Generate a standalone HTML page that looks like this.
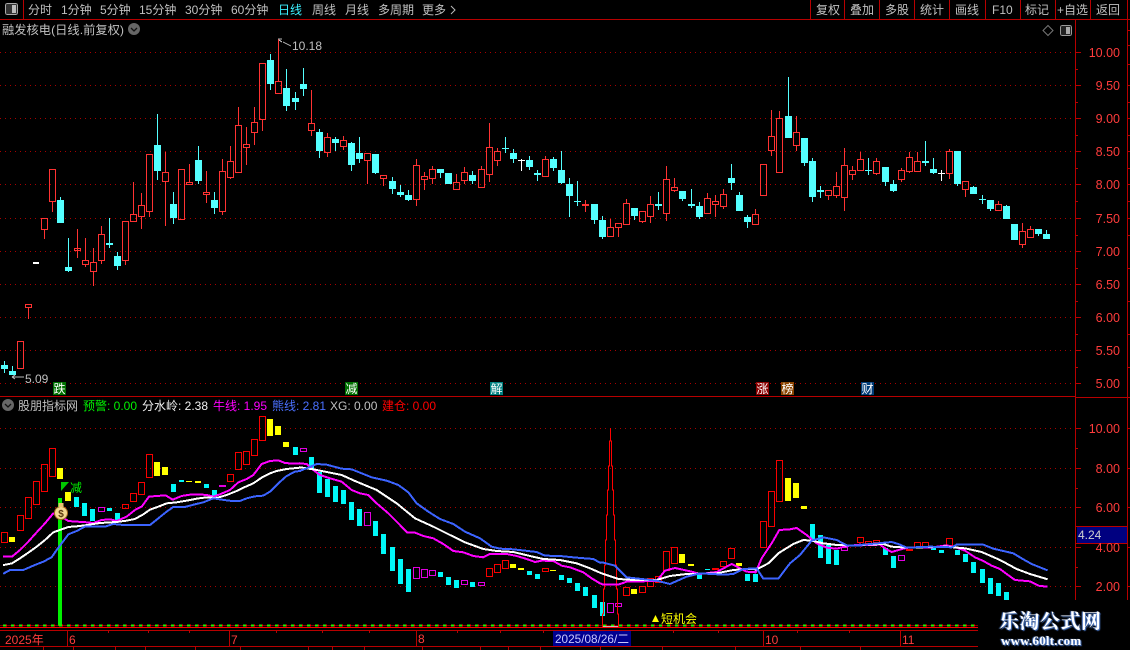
<!DOCTYPE html>
<html><head><meta charset="utf-8"><style>
html,body{margin:0;padding:0;background:#000;width:1130px;height:650px;overflow:hidden}
svg{position:absolute;left:0;top:0}
text{font-family:"Liberation Sans","WenQuanYi Zen Hei","Noto Sans CJK SC",sans-serif;font-size:12px}
.g{fill:#c0c0c0}.a{fill:#ff3c3c;text-anchor:end;font-size:12.5px}
#wm{position:absolute;left:978px;top:600px;width:152px;height:50px;background:#000}
#wm div{position:absolute;white-space:nowrap;color:#fff;text-shadow:1px 1px 1px #4a78c8,-1px 0 1px #4a78c8}
</style></head><body>
<svg width="1130" height="650" viewBox="0 0 1130 650" shape-rendering="crispEdges">
<!-- grid -->
<path d="M0 52.5H1075M0 85.5H1075M0 118.5H1075M0 151.5H1075M0 184.5H1075M0 218.5H1075M0 251.5H1075M0 284.5H1075M0 317.5H1075M0 350.5H1075M0 383.5H1075M0 428.5H1075M0 468.5H1075M0 507.5H1075M0 547.5H1075M0 586.5H1075" stroke="#a80000" stroke-width="1" stroke-dasharray="1 4" fill="none"/>
<!-- frame -->
<path d="M0 19.5H1130M23.5 0V19M810.5 0V19M844.5 0V19M879.5 0V19M914.5 0V19M949.5 0V19M985.5 0V19M1020.5 0V19M1055.5 0V19M1090.5 0V19M1127.5 0V600M0 396.5H1076M1075.5 19V600M1076 397.5H1130M1076 526.5H1127M1076 543.5H1127M0 630.5H978M0 646.5H978M67.5 630V646M229.5 630V646M416.5 630V646M763.5 630V646M900.5 630V646M1075 52.5h6M1075 85.5h6M1075 118.5h6M1075 151.5h6M1075 184.5h6M1075 218.5h6M1075 251.5h6M1075 284.5h6M1075 317.5h6M1075 350.5h6M1075 383.5h6M1075 69.5h3M1075 102.5h3M1075 135.5h3M1075 168.5h3M1075 201.5h3M1075 235.5h3M1075 268.5h3M1075 301.5h3M1075 334.5h3M1075 367.5h3M1075 428.5h6M1075 468.5h6M1075 507.5h6M1075 547.5h6M1075 586.5h6M1075 448.5h3M1075 488.5h3M1075 567.5h3M1127 30.5h3M1127 45.5h3M1127 64.5h3M1127 85.5h3M1127 102.5h3M1127 118.5h3M1127 135.5h3M1127 151.5h3M1127 168.5h3M1127 184.5h3M1127 201.5h3M1127 218.5h3M1127 235.5h3M1127 268.5h3M1127 301.5h3M1127 334.5h3M1127 367.5h3M1127 428.5h3M1127 468.5h3M1127 507.5h3M1127 547.5h3M1127 586.5h3M108.5 630v3M148.5 630v3M189.5 630v3M276.5 630v3M322.5 630v3M369.5 630v3M457.5 630v3M500.5 630v3M543.5 630v3M673.5 630v3M718.5 630v3M797.5 630v3M849.5 630v3M43.5 646v4M73.5 646v4M115.5 646v4M145.5 646v4M195.5 646v4M240.5 646v4M308.5 646v4M332.5 646v4M364.5 646v4M422.5 646v4M480.5 646v4M508.5 646v4M540.5 646v4M600.5 646v4M662.5 646v4M735.5 646v4M800.5 646v4M860.5 646v4" stroke="#b80000" stroke-width="1" fill="none"/>
<!-- top bar icons -->
<rect x="5.5" y="3.5" width="12" height="11" rx="2" fill="#333" stroke="#aaa"/><rect x="12" y="5" width="4" height="8" fill="#bbb"/>
<rect x="1060.5" y="25.5" width="11" height="10" rx="2" fill="#222" stroke="#999"/><rect x="1066" y="27" width="4" height="7" fill="#aaa"/>
<g shape-rendering="auto"><path d="M1048 25.5l5 5-5 5-5-5z" fill="none" stroke="#777"/>
<circle cx="134" cy="29" r="6" fill="#666"/><path d="M131 28l3 3 3-3" fill="none" stroke="#111" stroke-width="1.3"/>
<circle cx="8" cy="405" r="6" fill="#666"/><path d="M5 404l3 3 3-3" fill="none" stroke="#111" stroke-width="1.3"/>
<path d="M451 6l4 4-4 4" fill="none" stroke="#bbb"/></g>
<!-- top candles red -->
<path fill="none" stroke="#ff3232" stroke-width="1" d="M17.5 341.5h6V368.5h-6zM28.5 307V319M25.5 304.5h6V307.5h-6zM44.5 229V239M41.5 218.5h6V229.5h-6zM52.5 201V212M49.5 169.5h6V201.5h-6zM77.5 229V258M74.5 248.5h6V250.5h-6zM85.5 238V260M85.5 264V267M82.5 260.5h6V264.5h-6zM93.5 248V262M93.5 271V286M90.5 262.5h6V271.5h-6zM101.5 226V234M101.5 260V264M98.5 234.5h6V260.5h-6zM125.5 260V265M122.5 221.5h6V260.5h-6zM133.5 182V214M130.5 214.5h6V221.5h-6zM141.5 193V205M141.5 216V229M138.5 205.5h6V216.5h-6zM149.5 211V217M146.5 154.5h6V211.5h-6zM165.5 152V172M165.5 181V226M162.5 172.5h6V181.5h-6zM178.5 169.5h6V219.5h-6zM189.5 164V182M186.5 182.5h6V184.5h-6zM206.5 171V192M206.5 194V203M203.5 192.5h6V194.5h-6zM222.5 159V171M222.5 211V215M219.5 171.5h6V211.5h-6zM230.5 146V161M230.5 177V179M227.5 161.5h6V177.5h-6zM238.5 107V125M238.5 172V173M235.5 125.5h6V172.5h-6zM246.5 127V144M246.5 147V165M243.5 144.5h6V147.5h-6zM254.5 107V122M254.5 132V145M251.5 122.5h6V132.5h-6zM262.5 119V131M259.5 63.5h6V119.5h-6zM278.5 39V81M275.5 81.5h6V93.5h-6zM311.5 90V123M311.5 130V136M308.5 123.5h6V130.5h-6zM327.5 133V137M327.5 152V157M324.5 137.5h6V152.5h-6zM343.5 136V140M343.5 146V150M340.5 140.5h6V146.5h-6zM367.5 160V184M364.5 153.5h6V160.5h-6zM383.5 178V186M380.5 175.5h6V178.5h-6zM416.5 159V165M416.5 199V206M413.5 165.5h6V199.5h-6zM424.5 172V176M424.5 179V190M421.5 176.5h6V179.5h-6zM432.5 166V169M432.5 178V184M429.5 169.5h6V178.5h-6zM456.5 174V182M456.5 189V190M453.5 182.5h6V189.5h-6zM464.5 167V172M464.5 180V184M461.5 172.5h6V180.5h-6zM481.5 166V169M478.5 169.5h6V187.5h-6zM489.5 123V147M489.5 174V182M486.5 147.5h6V174.5h-6zM497.5 148V151M497.5 160V166M494.5 151.5h6V160.5h-6zM545.5 156V159M542.5 159.5h6V176.5h-6zM585.5 200V204M585.5 205V212M582.5 204.5h6V205.5h-6zM610.5 219V227M607.5 227.5h6V236.5h-6zM618.5 227V237M615.5 223.5h6V227.5h-6zM626.5 199V203M623.5 203.5h6V224.5h-6zM642.5 221V223M639.5 211.5h6V221.5h-6zM650.5 196V204M650.5 216V223M647.5 204.5h6V216.5h-6zM666.5 166V179M666.5 213V221M663.5 179.5h6V213.5h-6zM674.5 178V187M674.5 190V192M671.5 187.5h6V190.5h-6zM707.5 193V198M707.5 213V214M704.5 198.5h6V213.5h-6zM715.5 195V201M715.5 204V217M712.5 201.5h6V204.5h-6zM723.5 189V194M723.5 206V209M720.5 194.5h6V206.5h-6zM755.5 209V214M752.5 214.5h6V224.5h-6zM760.5 164.5h6V195.5h-6zM771.5 110V136M771.5 150V156M768.5 136.5h6V150.5h-6zM779.5 111V118M776.5 118.5h6V172.5h-6zM796.5 116V132M796.5 145V151M793.5 132.5h6V145.5h-6zM828.5 195V200M825.5 190.5h6V195.5h-6zM836.5 172V186M836.5 195V198M833.5 186.5h6V195.5h-6zM844.5 148V165M844.5 197V211M841.5 165.5h6V197.5h-6zM852.5 166V170M852.5 174V180M849.5 170.5h6V174.5h-6zM860.5 152V159M857.5 159.5h6V170.5h-6zM876.5 158V161M876.5 173V175M873.5 161.5h6V173.5h-6zM901.5 168V170M901.5 179V182M898.5 170.5h6V179.5h-6zM909.5 152V157M909.5 171V173M906.5 157.5h6V171.5h-6zM917.5 152V161M914.5 161.5h6V171.5h-6zM949.5 149V151M949.5 173V179M946.5 151.5h6V173.5h-6zM965.5 189V197M962.5 181.5h6V189.5h-6zM998.5 201V204M998.5 210V211M995.5 204.5h6V210.5h-6zM1022.5 223V231M1022.5 244V248M1019.5 231.5h6V244.5h-6zM1030.5 226V229M1027.5 229.5h6V237.5h-6z"/>
<!-- top candles cyan -->
<path fill="#54ffff" d="M1 365h7v4h-7zM4 361h1v12h-1zM9 371h7v4h-7zM12 366h1v9h-1zM57 200h7v23h-7zM60 197h1v4h-1zM65 267h7v4h-7zM68 238h1v34h-1zM106 243h7v2h-7zM109 218h1v30h-1zM114 256h7v10h-7zM117 252h1v18h-1zM154 145h7v26h-7zM157 114h1v66h-1zM170 204h7v14h-7zM173 192h1v32h-1zM195 160h7v21h-7zM198 146h1v38h-1zM211 200h7v8h-7zM214 192h1v22h-1zM267 60h7v24h-7zM270 54h1v36h-1zM283 88h7v18h-7zM286 69h1v42h-1zM292 98h7v4h-7zM295 92h1v18h-1zM300 84h7v5h-7zM303 68h1v28h-1zM316 132h7v19h-7zM319 129h1v29h-1zM332 139h7v4h-7zM335 137h1v14h-1zM348 143h7v22h-7zM351 142h1v29h-1zM356 153h7v6h-7zM359 137h1v26h-1zM372 154h7v19h-7zM375 154h1v20h-1zM389 181h7v8h-7zM392 177h1v17h-1zM397 192h7v3h-7zM400 185h1v12h-1zM405 195h7v5h-7zM408 190h1v11h-1zM437 169h7v4h-7zM440 169h1v9h-1zM445 173h7v11h-7zM469 175h7v6h-7zM472 171h1v13h-1zM502 148h7v1h-7zM505 137h1v16h-1zM510 153h7v6h-7zM513 149h1v14h-1zM526 160h7v7h-7zM529 156h1v14h-1zM534 173h7v2h-7zM537 170h1v11h-1zM550 159h7v9h-7zM553 157h1v14h-1zM558 170h7v13h-7zM561 151h1v33h-1zM566 184h7v12h-7zM569 178h1v39h-1zM574 201h7v1h-7zM577 181h1v25h-1zM591 204h7v16h-7zM594 204h1v20h-1zM599 220h7v17h-7zM602 216h1v23h-1zM631 208h7v8h-7zM634 208h1v12h-1zM655 204h7v2h-7zM658 192h1v18h-1zM679 191h7v8h-7zM682 191h1v10h-1zM688 204h7v2h-7zM691 189h1v19h-1zM696 206h7v11h-7zM699 202h1v17h-1zM728 178h7v5h-7zM731 164h1v26h-1zM736 195h7v16h-7zM739 192h1v19h-1zM744 217h7v5h-7zM747 215h1v13h-1zM785 116h7v22h-7zM788 77h1v61h-1zM801 138h7v25h-7zM804 138h1v28h-1zM809 161h7v36h-7zM812 158h1v44h-1zM817 190h7v2h-7zM820 186h1v12h-1zM865 170h7v1h-7zM868 158h1v17h-1zM882 167h7v15h-7zM885 167h1v19h-1zM890 184h7v7h-7zM893 180h1v12h-1zM922 161h7v2h-7zM925 141h1v25h-1zM930 169h7v4h-7zM933 158h1v16h-1zM954 151h7v33h-7zM957 151h1v35h-1zM970 187h7v7h-7zM973 186h1v8h-1zM979 199h7v1h-7zM982 195h1v9h-1zM987 200h7v9h-7zM990 200h1v11h-1zM1003 206h7v13h-7zM1006 205h1v2h-1zM1011 224h7v16h-7zM1035 229h7v5h-7zM1038 229h1v7h-1zM1043 234h7v5h-7zM1046 230h1v5h-1z"/>
<!-- top white -->
<path fill="#fff" d="M33 262h6v2h-6zM518 160h7v1h-7zM521 159h1v12h-1zM938 173h7v1h-7zM941 170h1v11h-1z"/>
<!-- annotations -->
<path d="M278 39h4M283 42l8 4M279 40l3 2M12 377h12" stroke="#bdbdbd" fill="none"/>
<path d="M12 377l3-2M12 377l3 2" stroke="#bdbdbd" fill="none" shape-rendering="auto"/>
<text x="292" y="50" class="g">10.18</text><text x="25" y="383" class="g">5.09</text>
<!-- tags -->
<rect x="53" y="382" width="13" height="13" fill="#007000"/><rect x="345" y="382" width="13" height="13" fill="#007000"/><rect x="490" y="382" width="13" height="13" fill="#008080"/><rect x="756" y="382" width="13" height="13" fill="#8b0000"/><rect x="781" y="382" width="13" height="13" fill="#8b4500"/><rect x="861" y="382" width="13" height="13" fill="#003c78"/>
<g fill="#fff"><text x="53.5" y="393">跌</text><text x="345.5" y="393">减</text><text x="490.5" y="393">解</text><text x="756.5" y="393">涨</text><text x="781.5" y="393">榜</text><text x="861.5" y="393">财</text></g>
<!-- lower candles -->
<path fill="#00f8f8" d="M74 497h5v10h-5zM82 503h5v13h-5zM90 509h5v12h-5zM107 508h5v3h-5zM115 513h5v8h-5zM171 484h5v8h-5zM179 480h5v2h-5zM204 484h5v4h-5zM212 490h5v7h-5zM293 447h5v8h-5zM309 457h5v13h-5zM317 472h5v21h-5zM325 479h5v18h-5zM333 486h5v16h-5zM341 490h5v14h-5zM349 502h5v18h-5zM357 509h5v17h-5zM373 521h5v15h-5zM381 534h5v20h-5zM390 547h5v24h-5zM398 559h5v25h-5zM406 569h5v23h-5zM438 572h5v5h-5zM446 577h5v8h-5zM454 580h5v8h-5zM470 582h5v5h-5zM527 571h5v4h-5zM535 574h5v5h-5zM559 575h5v5h-5zM567 578h5v5h-5zM575 583h5v8h-5zM583 587h5v9h-5zM592 595h5v13h-5zM600 602h5v14h-5zM697 574h5v5h-5zM705 569h5v1h-5zM745 574h5v7h-5zM753 574h5v8h-5zM810 524h5v15h-5zM818 535h5v23h-5zM826 545h5v19h-5zM834 550h5v15h-5zM883 548h5v7h-5zM891 556h5v12h-5zM931 547h5v3h-5zM939 550h5v3h-5zM955 550h5v5h-5zM963 554h5v8h-5zM971 562h5v11h-5zM980 569h5v14h-5zM988 578h5v16h-5zM996 583h5v13h-5zM1004 592h5v8h-5z"/>
<path fill="#ffff00" d="M9 537h6v5h-6zM57 468h6v11h-6zM65 492h6v9h-6zM154 462h6v14h-6zM162 467h6v8h-6zM186 481h6v1h-6zM195 481h6v2h-6zM267 419h6v17h-6zM275 426h6v9h-6zM283 442h6v5h-6zM510 564h6v4h-6zM518 568h6v2h-6zM550 570h6v1h-6zM631 589h6v5h-6zM679 554h6v9h-6zM688 564h6v2h-6zM736 563h6v3h-6zM785 478h6v23h-6zM793 483h6v15h-6zM801 506h6v3h-6z"/>
<path fill="none" stroke="#f80000" stroke-width="1" d="M1.5 532.5h6V542.5h-6zM17.5 515.5h6V530.5h-6zM25.5 497.5h6V518.5h-6zM33.5 481.5h6V504.5h-6zM41.5 464.5h6V491.5h-6zM49.5 448.5h6V476.5h-6zM122.5 504.5h6V508.5h-6zM130.5 493.5h6V501.5h-6zM138.5 482.5h6V494.5h-6zM146.5 454.5h6V477.5h-6zM227.5 474.5h6V481.5h-6zM235.5 452.5h6V469.5h-6zM243.5 451.5h6V464.5h-6zM251.5 439.5h6V455.5h-6zM259.5 416.5h6V440.5h-6zM486.5 568.5h6V576.5h-6zM494.5 564.5h6V572.5h-6zM502.5 560.5h6V568.5h-6zM542.5 568.5h6V571.5h-6zM623.5 587.5h6V595.5h-6zM639.5 586.5h6V592.5h-6zM647.5 578.5h6V586.5h-6zM655.5 576.5h6V582.5h-6zM663.5 551.5h6V570.5h-6zM671.5 547.5h6V563.5h-6zM712.5 568.5h6V569.5h-6zM720.5 561.5h6V566.5h-6zM728.5 548.5h6V558.5h-6zM760.5 521.5h6V547.5h-6zM768.5 491.5h6V526.5h-6zM776.5 460.5h6V501.5h-6zM857.5 537.5h6V542.5h-6zM865.5 541.5h6V543.5h-6zM873.5 540.5h6V542.5h-6zM906.5 549.5h6V550.5h-6zM914.5 542.5h6V547.5h-6zM922.5 542.5h6V547.5h-6zM946.5 538.5h6V545.5h-6z"/>
<path fill="none" stroke="#e000e0" stroke-width="1" d="M98.5 507.5h6V511.5h-6zM300.5 448.5h6V451.5h-6zM364.5 512.5h6V525.5h-6zM413.5 567.5h6V578.5h-6zM421.5 569.5h6V577.5h-6zM429.5 570.5h6V575.5h-6zM461.5 580.5h6V584.5h-6zM478.5 582.5h6V585.5h-6zM607.5 603.5h6V612.5h-6zM615.5 603.5h6V606.5h-6zM841.5 547.5h6V550.5h-6zM898.5 555.5h6V560.5h-6z"/>
<rect x="219" y="485" width="7" height="2" fill="#e000e0"/>
<!-- big tower -->
<path fill="none" stroke="#ff0000" stroke-width="1" d="M610.5 428V441H609.5V466H608.5V490H607.5V515H606.5V540H605.5V565H604.5V589H603.5V614H602.5V627M610.5 441H611.5V466H612.5V490H613.5V515H614.5V540H615.5V565H616.5V589H617.5V614H618.5V627"/>
<!-- green bar -->
<rect x="58" y="498" width="4" height="128" fill="#00f000"/>
<path d="M61 482h8l-8 9z" fill="#00c800" shape-rendering="auto"/>
<!-- lines -->
<g fill="none" stroke-linejoin="round" stroke-linecap="square">
<g transform="translate(0 395) scale(.3333)" stroke-width="6" stroke="#ff00ff"><polyline points="12,485 36,485 60,465 85,440 110,412 135,385 160,355 182,355 195,372 205,378 230,380 250,381 280,384 305,375 330,373 350,378 380,365 405,345 425,335 447,305 470,303 497,301 518,314 545,303 570,299 595,298 620,300 640,305 660,298 690,285 715,262 740,252 760,240 785,207 810,198 835,196 855,204 880,206 900,205"/></g>
<g transform="translate(300 450) scale(.3333)" stroke-width="6" stroke="#ff00ff"><polyline points="0,40 20,42 40,60 60,75 90,85 125,95 155,120 180,130 205,135 230,160 265,190 295,220 322,248 345,248 370,258 400,265 430,282 460,303 490,307 520,318 550,322 570,312 620,312 650,318 680,327 705,336 725,332 760,333 785,347 810,352 850,367 875,385 900,400"/></g>
<g transform="translate(590 420) scale(.3333)" stroke-width="6" stroke="#ff00ff"><polyline points="30,490 40,494 85,494 110,485 200,483 225,452 255,444 305,455 330,462 380,456 425,432 470,455 497,457 515,415 545,370 568,330 600,328 620,324 650,345 680,370 710,383 740,386 770,378 810,374"/></g>
<g transform="translate(850 500) scale(.3333)" stroke-width="6" stroke="#ff00ff"><polyline points="30,136 90,134 110,148 125,156 160,146 175,143 240,143 290,136 320,143 345,152 375,172 400,183 425,197 450,207 470,222 495,240 540,244 565,257 590,260"/></g>
<g transform="translate(0 395) scale(.3333)" stroke-width="6" stroke="#fff"><polyline points="12,510 36,505 60,490 85,473 110,455 135,435 160,412 185,403 205,396 230,394 255,391 280,387 300,384 350,381 380,377 405,372 430,358 450,344 475,335 500,325 530,322 560,317 590,311 620,307 650,309 680,300 710,288 735,276 760,265 785,248 810,235 830,228 860,222 900,218"/></g>
<g transform="translate(300 450) scale(.3333)" stroke-width="6" stroke="#fff"><polyline points="0,52 40,58 80,66 125,75 165,93 230,120 290,160 345,205 400,230 450,255 495,277 550,297 590,303 640,306 690,318 730,327 780,330 830,340 870,355 900,368"/></g>
<g transform="translate(590 420) scale(.3333)" stroke-width="6" stroke="#fff"><polyline points="30,458 40,462 85,477 130,480 200,480 240,468 290,462 380,460 430,450 470,447 500,448 535,430 565,400 610,372 640,360 665,362 700,370 740,375 770,376 810,376"/></g>
<g transform="translate(850 500) scale(.3333)" stroke-width="6" stroke="#fff"><polyline points="30,135 100,132 125,140 170,143 290,140 345,145 395,156 450,180 500,207 540,222 590,237"/></g>
<g transform="translate(0 395) scale(.3333)" stroke-width="6" stroke="#3c64ff"><polyline points="12,535 30,525 70,525 100,512 130,500 155,487 170,465 185,445 205,418 230,408 255,395 315,395 340,387 370,390 450,390 475,370 500,350 520,336 555,336 585,328 610,322 640,310 665,314 695,318 720,318 740,310 765,304 790,302 810,290 835,265 860,243 885,230 900,228"/></g>
<g transform="translate(300 450) scale(.3333)" stroke-width="6" stroke="#3c64ff"><polyline points="0,62 20,55 50,42 80,44 125,56 155,58 185,70 215,82 260,92 295,105 325,127 350,160 385,185 420,207 460,222 495,245 540,265 575,290 600,296 640,298 710,306 735,317 780,318 830,323 880,327 900,338"/></g>
<g transform="translate(590 420) scale(.3333)" stroke-width="6" stroke="#3c64ff"><polyline points="30,428 40,428 75,437 110,472 200,482 240,492 290,470 330,460 400,464 430,462 460,447 500,445 520,476 565,476 600,430 630,405 665,362 700,352 740,360 770,376 810,376"/></g>
<g transform="translate(850 500) scale(.3333)" stroke-width="6" stroke="#3c64ff"><polyline points="30,135 125,126 145,132 170,143 240,140 305,142 320,134 400,134 430,146 490,160 520,178 545,192 590,210"/></g>
</g>
<!-- money bag -->
<g shape-rendering="auto"><circle cx="61" cy="513" r="6.5" fill="#f3d890" stroke="#a06a20"/><rect x="58.5" y="503" width="5" height="4" fill="#e8c070"/><text x="61" y="517" text-anchor="middle" style="font-size:10px;font-weight:bold" fill="#5a3a10">$</text></g>
<text x="70" y="492" fill="#00f000">减</text>
<!-- baseline -->
<rect x="0" y="625" width="978" height="1" fill="#f00000" opacity=".55"/>
<path d="M0 625.5H978" stroke="#ff0000" stroke-width="2" stroke-dasharray="3 5" stroke-dashoffset="-4"/>
<path d="M3 625.5H978" stroke="#20f000" stroke-width="2" stroke-dasharray="3 5"/>
<path d="M0 627.5H978" stroke="#ff0000"/>
<path d="M603 626.5h15" stroke="#bbb"/>
<!-- short chance -->
<path d="M655.5 615l3.5 7h-7z" fill="#ffff00" shape-rendering="auto"/>
<text x="661" y="623" fill="#ffff00">短机会</text>
<!-- date box -->
<rect x="553" y="631" width="78" height="15" fill="#000090"/>
<text x="555" y="643" fill="#c8c8ff" textLength="74" lengthAdjust="spacingAndGlyphs">2025/08/26/二</text>
<g fill="#ff3c3c"><text x="5" y="644">2025年</text><text x="69" y="644">6</text><text x="231" y="644">7</text><text x="418" y="643">8</text><text x="765" y="644">10</text><text x="902" y="644">11</text></g>
<!-- top bar text -->
<g class="g"><text x="28" y="14">分时</text><text x="61" y="14">1分钟</text><text x="100" y="14">5分钟</text><text x="139" y="14">15分钟</text><text x="185" y="14">30分钟</text><text x="231" y="14">60分钟</text><text x="312" y="14">周线</text><text x="345" y="14">月线</text><text x="378" y="14">多周期</text><text x="422" y="14">更多</text>
<text x="816" y="14">复权</text><text x="850" y="14">叠加</text><text x="885" y="14">多股</text><text x="920" y="14">统计</text><text x="955" y="14">画线</text><text x="992" y="14">F10</text><text x="1025" y="14">标记</text><text x="1057" y="14">+自选</text><text x="1096" y="14">返回</text>
<text x="2" y="34" textLength="122" lengthAdjust="spacingAndGlyphs">融发核电(日线.前复权)</text>
<text x="18" y="410">股朋指标网</text><text x="330" y="410">XG: 0.00</text></g>
<text x="278" y="14" fill="#3cf0ff">日线</text>
<text x="83" y="410" fill="#00f000">预警: 0.00</text><text x="142" y="410" fill="#f0f0f0">分水岭: 2.38</text><text x="213" y="410" fill="#ff00ff">牛线: 1.95</text><text x="272" y="410" fill="#4a70ff">熊线: 2.81</text><text x="382" y="410" fill="#ff0000">建仓: 0.00</text>
<!-- axis labels -->
<text class="a" x="1120" y="57">10.00</text><text class="a" x="1120" y="90">9.50</text><text class="a" x="1120" y="123">9.00</text><text class="a" x="1120" y="156">8.50</text><text class="a" x="1120" y="189">8.00</text><text class="a" x="1120" y="223">7.50</text><text class="a" x="1120" y="256">7.00</text><text class="a" x="1120" y="289">6.50</text><text class="a" x="1120" y="322">6.00</text><text class="a" x="1120" y="355">5.50</text><text class="a" x="1120" y="388">5.00</text>
<text class="a" x="1120" y="433">10.00</text><text class="a" x="1120" y="473">8.00</text><text class="a" x="1120" y="512">6.00</text><text class="a" x="1120" y="552">4.00</text><text class="a" x="1120" y="591">2.00</text>
<rect x="1077" y="527" width="50" height="16" fill="#000080"/>
<text x="1078" y="539" fill="#d0d0d0">4.24</text>
</svg>
<div id="wm">
<div style="left:21px;top:8px;font:bold 20px/24px 'Noto Serif CJK SC','Liberation Serif',serif;letter-spacing:.5px">乐淘公式网</div>
<div style="left:23px;top:33px;font:bold 13px/16px 'Liberation Serif',serif;letter-spacing:.2px">www.60lt.com</div>
</div>
</body></html>
